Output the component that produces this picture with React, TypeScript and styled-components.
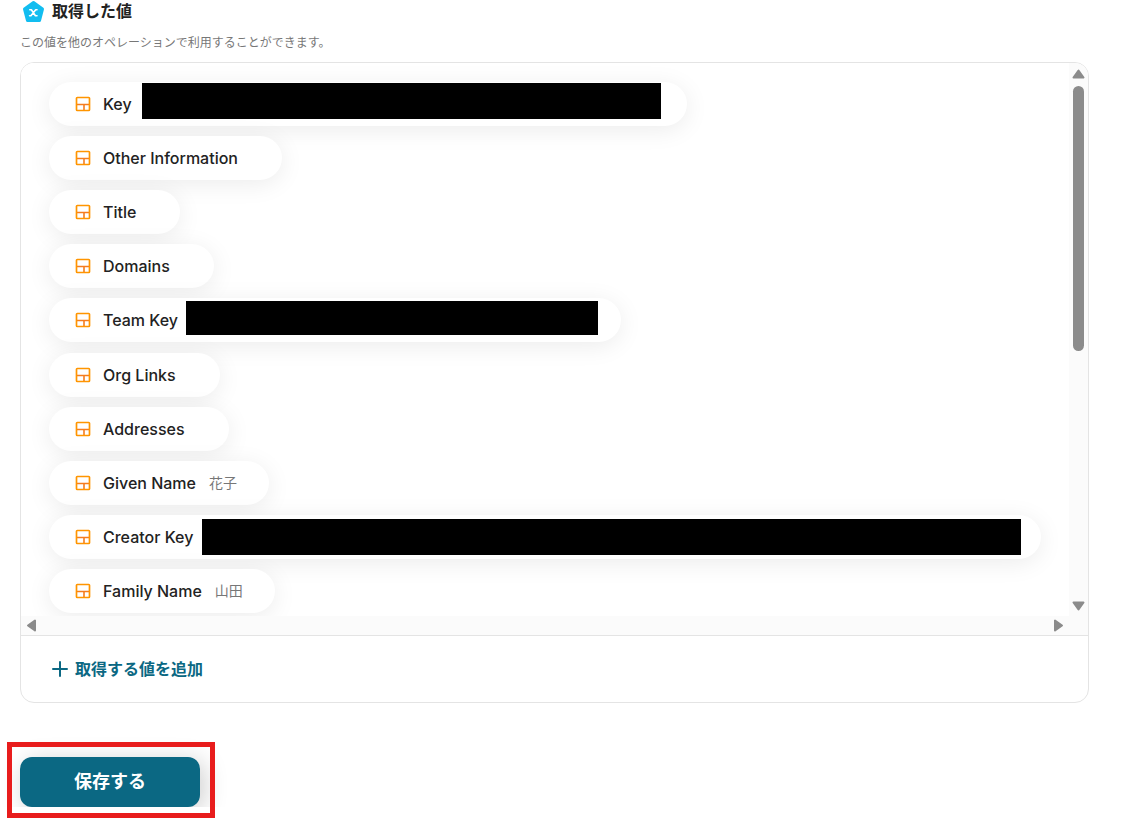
import React from "react";
import styled, { createGlobalStyle } from "styled-components";

const GlobalStyle = createGlobalStyle`
  *, *::before, *::after { box-sizing: border-box; }
  body {
    margin: 0;
    background: #fff;
    color: #222;
    font-family: Inter, "Noto Sans CJK JP", sans-serif;
  }
`;

const Page = styled.main`
  padding: 0 41px 12px 20px;
`;

const Heading = styled.h2`
  display: flex;
  align-items: flex-start;
  gap: 6px;
  height: 24px;
  margin: 0;
  font-size: 16px;
  font-weight: 600;
  line-height: 22px;
`;

const HeadingIcon = styled.svg`
  flex: none;
  width: 26px;
  height: 24px;
`;

const Lead = styled.p`
  margin: 9px 0;
  color: #777;
  font-size: 12px;
  line-height: 20px;
`;

const Card = styled.section`
  overflow: hidden;
  border: 1px solid #e4e4e4;
  border-radius: 14px;
`;

const ScrollArea = styled.div`
  display: grid;
  grid-template-columns: minmax(0, 1fr) 19px;
  grid-template-rows: auto 19px;
  background: #fbfbfb;
  border-bottom: 1px solid #e4e4e4;
`;

const FieldList = styled.ul`
  display: flex;
  flex-direction: column;
  align-items: flex-start;
  justify-content: space-between;
  gap: 10px;
  min-height: 553px;
  margin: 0;
  padding: 19px 28px 3px;
  overflow: hidden;
  background: #fff;
  list-style: none;
`;

const Pill = styled.li<{ $end: number }>`
  display: flex;
  align-items: center;
  height: 44px;
  padding: 0 ${(p) => p.$end}px 0 26px;
  border-radius: 22px;
  background: #fff;
  box-shadow: 0 4px 24px rgba(0, 0, 0, 0.08);
  white-space: nowrap;
`;

const FieldIcon = styled.svg`
  flex: none;
  width: 16px;
  height: 16px;
  margin-right: 12px;
`;

const FieldName = styled.span`
  font-size: 16px;
  font-weight: 500;
  line-height: 24px;
`;

const FieldValue = styled.span`
  margin-left: 13px;
  color: #777;
  font-size: 14px;
  line-height: 24px;
`;

const Redaction = styled.span<{ $width: number; $height: number; $top: number; $gap: number }>`
  align-self: flex-start;
  width: ${(p) => p.$width}px;
  height: ${(p) => p.$height}px;
  margin: ${(p) => p.$top}px 0 0 ${(p) => p.$gap}px;
  background: #000;
`;

const VerticalBar = styled.div`
  display: flex;
  flex-direction: column;
  align-items: center;
  padding: 5px 0 4px;
`;

const Thumb = styled.div`
  width: 11px;
  height: 265px;
  margin: 6px 0 auto;
  border-radius: 6px;
  background: #8b8b8b;
`;

const HorizontalBar = styled.div`
  display: flex;
  align-items: center;
  justify-content: space-between;
  padding: 0 5px;
`;

const ArrowIcon = styled.svg`
  flex: none;
  fill: #8b8b8b;
  stroke: #8b8b8b;
  stroke-width: 2;
  stroke-linejoin: round;
`;

const CardFooter = styled.div`
  display: flex;
  align-items: center;
  height: 66px;
  padding: 0 31px;
`;

const AddButton = styled.button`
  display: flex;
  align-items: center;
  gap: 7px;
  padding: 0;
  border: 0;
  background: none;
  color: #0b6883;
  font: inherit;
  font-size: 16px;
  font-weight: 600;
  line-height: 24px;
  cursor: pointer;
`;

const Actions = styled.div`
  position: relative;
  width: 180px;
  margin-top: 54px;
`;

const SaveButton = styled.button`
  display: block;
  width: 100%;
  height: 50px;
  padding: 0 0 4px;
  border: 0;
  border-radius: 12px;
  background: #0b6883;
  box-shadow: 4px 4px 24px rgba(0, 0, 0, 0.2);
  clip-path: inset(-30px -40px 0 -20px);
  color: #fff;
  font: inherit;
  font-size: 18px;
  font-weight: 700;
  cursor: pointer;
`;

const Highlight = styled.div`
  position: absolute;
  inset: -15px -15px -11px -13px;
  border: 5px solid #e81c1c;
  pointer-events: none;
`;

type Mask = { width: number; height: number; top: number; gap: number; end: number };
type Field = { name: string; value?: string; mask?: Mask };

const fields: Field[] = [
  { name: "Key", mask: { width: 519, height: 36, top: 1, gap: 10, end: 26 } },
  { name: "Other Information" },
  { name: "Title" },
  { name: "Domains" },
  { name: "Team Key", mask: { width: 412, height: 34, top: 3, gap: 8, end: 23 } },
  { name: "Org Links" },
  { name: "Addresses" },
  { name: "Given Name", value: "花子" },
  { name: "Creator Key", mask: { width: 819, height: 36, top: 4, gap: 9, end: 20 } },
  { name: "Family Name", value: "山田" },
];

const FieldRow = ({ name, value, mask }: Field) => (
  <Pill $end={mask ? mask.end : value ? 32 : 44}>
    <FieldIcon viewBox="0 0 16 16" fill="none" aria-hidden="true">
      <path d="M1.7 8.5H14.3M9 8.5V14" stroke="#f57c1f" strokeWidth="1.6" />
      <rect x="1.5" y="1.5" width="13" height="13" rx="0.8" stroke="#ff9500" strokeWidth="1.7" />
    </FieldIcon>
    <FieldName>{name}</FieldName>
    {value && <FieldValue>{value}</FieldValue>}
    {mask && <Redaction $width={mask.width} $height={mask.height} $top={mask.top} $gap={mask.gap} />}
  </Pill>
);

export default function App() {
  return (
    <>
      <GlobalStyle />
      <Page>
        <Heading>
          <HeadingIcon viewBox="0 0 26 24" aria-hidden="true">
            <path
              d="M13.5 2.5 22.5 9 19.5 20.5H7.5L4.5 9Z"
              fill="#12bdf0"
              stroke="#12bdf0"
              strokeWidth="3"
              strokeLinejoin="round"
            />
            <path
              d="M9.8 9.8h1.6l4 6h1.6M17 9.8h-1.3l-4.8 6H9.6"
              fill="none"
              stroke="#fff"
              strokeWidth="1.6"
              strokeLinecap="round"
              strokeLinejoin="round"
            />
          </HeadingIcon>
          取得した値
        </Heading>
        <Lead>この値を他のオペレーションで利用することができます。</Lead>
        <Card>
          <ScrollArea>
            <FieldList>
              {fields.map((field) => (
                <FieldRow key={field.name} {...field} />
              ))}
            </FieldList>
            <VerticalBar>
              <ArrowIcon width="13" height="12" viewBox="0 0 13 12" aria-hidden="true">
                <path d="M6.5 2.5 11.5 9.5H1.5Z" />
              </ArrowIcon>
              <Thumb />
              <ArrowIcon width="13" height="12" viewBox="0 0 13 12" aria-hidden="true">
                <path d="M6.5 9.5 11.5 2.5H1.5Z" />
              </ArrowIcon>
            </VerticalBar>
            <HorizontalBar>
              <ArrowIcon width="12" height="13" viewBox="0 0 12 13" aria-hidden="true">
                <path d="M2 6.5 9 1.5V11.5Z" />
              </ArrowIcon>
              <ArrowIcon width="12" height="13" viewBox="0 0 12 13" aria-hidden="true">
                <path d="M10 6.5 3 1.5V11.5Z" />
              </ArrowIcon>
            </HorizontalBar>
          </ScrollArea>
          <CardFooter>
            <AddButton type="button">
              <svg width="16" height="16" viewBox="0 0 16 16" aria-hidden="true">
                <path d="M8 1V15M1 8H15" stroke="currentColor" strokeWidth="2" strokeLinecap="round" />
              </svg>
              取得する値を追加
            </AddButton>
          </CardFooter>
        </Card>
        <Actions>
          <SaveButton type="button">保存する</SaveButton>
          <Highlight />
        </Actions>
      </Page>
    </>
  );
}
